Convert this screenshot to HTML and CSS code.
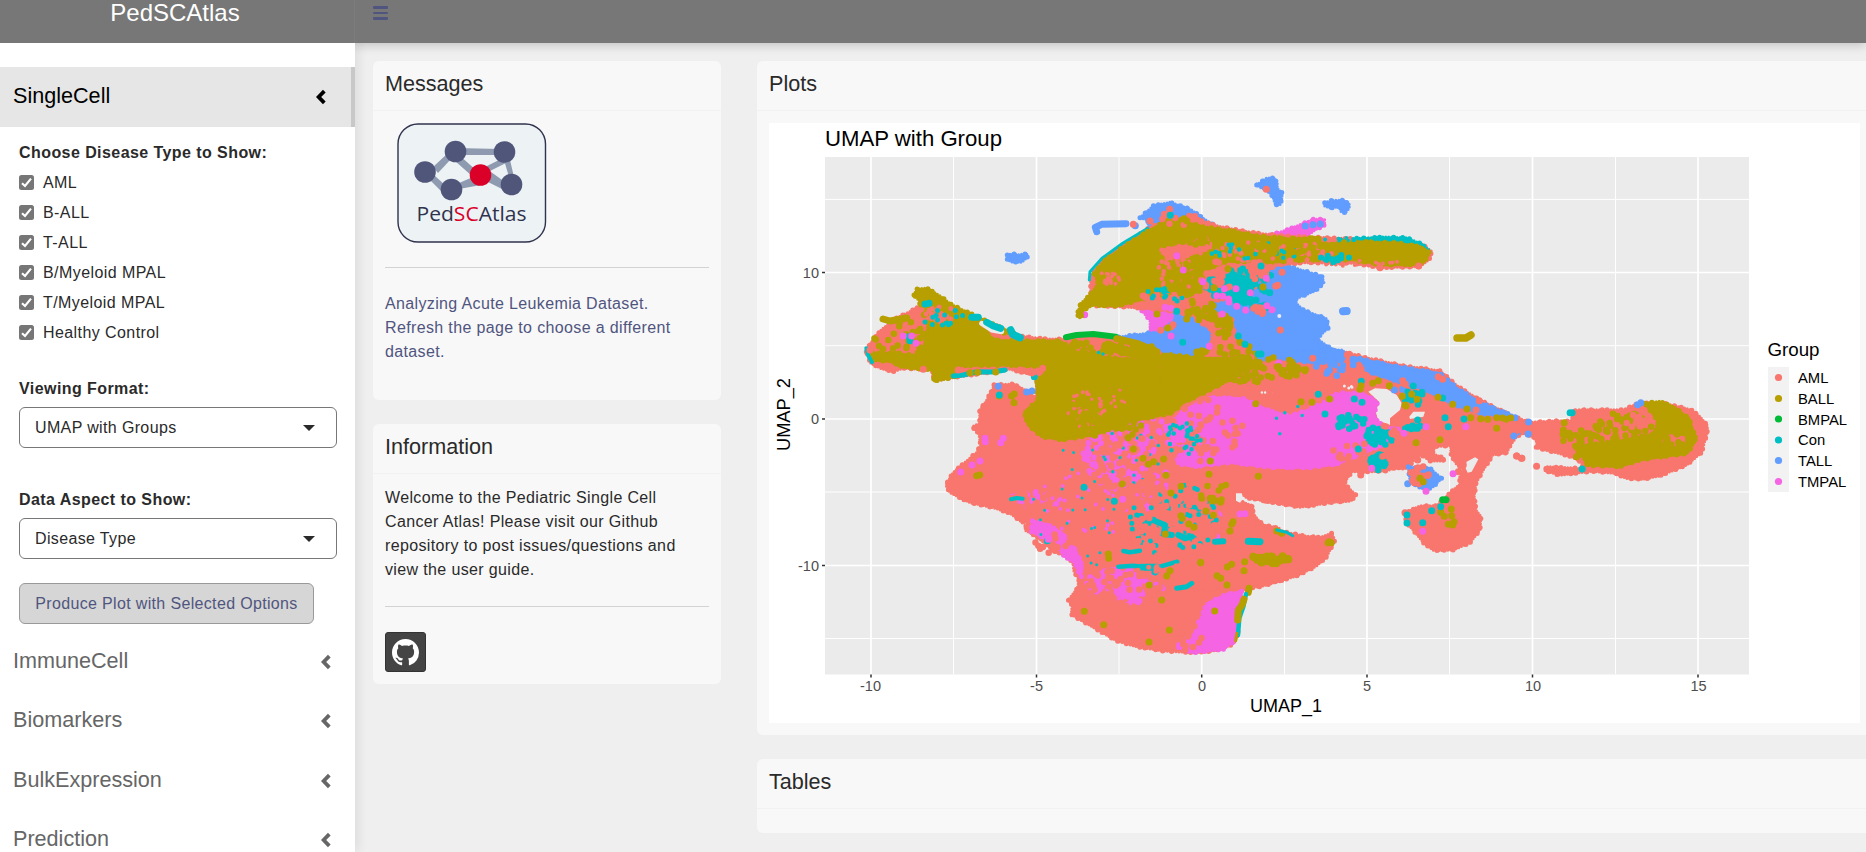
FILE: index.html
```html
<!DOCTYPE html>
<html lang="en">
<head>
<meta charset="utf-8">
<title>PedSCAtlas</title>
<link rel="stylesheet" href="styles.css">
</head>
<body>
<svg class="defs" width="0" height="0" aria-hidden="true">
  <symbol id="chevron" viewBox="0 0 10 16"><path d="M8.3 2.2 2.6 8l5.7 5.8" fill="none" stroke="currentColor" stroke-width="3.8"/></symbol>
  <symbol id="tick" viewBox="0 0 15 15"><path d="M3 8.2 6 11 12 3.6" fill="none" stroke="#fff" stroke-width="2.2"/></symbol>
</svg>
<header class="topbar">
  <div class="brand">PedSCAtlas</div>
  <button class="menu-toggle" aria-label="Toggle sidebar"><i></i><i></i><i></i></button>
</header>
<div class="shell">
  <aside class="sidebar">
    <a class="nav-row active"><span>SingleCell</span><svg class="chev"><use href="#chevron"/></svg></a>
    <div class="controls">
      <div class="label">Choose Disease Type to Show:</div>
      <div class="check"><svg class="box"><use href="#tick"/></svg><span>AML</span></div>
      <div class="check"><svg class="box"><use href="#tick"/></svg><span>B-ALL</span></div>
      <div class="check"><svg class="box"><use href="#tick"/></svg><span>T-ALL</span></div>
      <div class="check"><svg class="box"><use href="#tick"/></svg><span>B/Myeloid MPAL</span></div>
      <div class="check"><svg class="box"><use href="#tick"/></svg><span>T/Myeloid MPAL</span></div>
      <div class="check"><svg class="box"><use href="#tick"/></svg><span>Healthy Control</span></div>
      <div class="label label-format">Viewing Format:</div>
      <div class="select">UMAP with Groups<i class="caret"></i></div>
      <div class="label label-aspect">Data Aspect to Show:</div>
      <div class="select">Disease Type<i class="caret"></i></div>
      <button class="produce">Produce Plot with Selected Options</button>
    </div>
    <a class="nav-row"><span>ImmuneCell</span><svg class="chev"><use href="#chevron"/></svg></a>
    <a class="nav-row"><span>Biomarkers</span><svg class="chev"><use href="#chevron"/></svg></a>
    <a class="nav-row"><span>BulkExpression</span><svg class="chev"><use href="#chevron"/></svg></a>
    <a class="nav-row"><span>Prediction</span><svg class="chev"><use href="#chevron"/></svg></a>
  </aside>
  <main class="content">
    <div class="col-side">
      <section class="card messages">
        <h3>Messages</h3>
        <div class="card-body">
          <svg class="logo" viewBox="0 0 150 120">
            <rect x="1" y="1" width="147.500" height="118" rx="20" fill="#edf2f5" stroke="#30334d" stroke-width="1.4"/>
            <g fill="#8e9ab0">
              <path d="M58 25l46 1v6H58zM36 44l14-13 5 4-14 15zM37 52l12 11-5 5-10-10zM62 32l18 16-5 5-17-15zM88 44l16-8 5 4-20 10zM107 37h6l4 17h-5zM94 49l14 10-3 7-14-7zM62 60l14-6 8 8-22 4z"/>
            </g>
            <g fill="#50557a"><circle cx="28" cy="49" r="10.8"/><circle cx="58.5" cy="28.5" r="10.8"/><circle cx="107.5" cy="29" r="10.8"/><circle cx="54.500" cy="66.500" r="10.800"/><circle cx="114.500" cy="61.500" r="10.800"/></g>
            <circle cx="83.500" cy="52" r="10.800" fill="#da0028"/>
            <text x="19.5" y="98" textLength="110" lengthAdjust="spacingAndGlyphs" font-family="Open Sans" font-size="20" fill="#30334d">Ped<tspan fill="#da0028">SC</tspan>Atlas</text>
          </svg>
          <hr>
          <p class="notice">Analyzing Acute Leukemia Dataset. Refresh the page to choose a different dataset.</p>
        </div>
      </section>
      <section class="card info">
        <h3>Information</h3>
        <div class="card-body">
          <p>Welcome to the Pediatric Single Cell Cancer Atlas! Please visit our Github repository to post issues/questions and view the user guide.</p>
          <hr>
          <a class="github" aria-label="Github"><svg viewBox="0 0 16 16"><path fill="#fff" d="M8 0C3.58 0 0 3.58 0 8c0 3.54 2.29 6.53 5.47 7.59.4.07.55-.17.55-.38 0-.19-.01-.82-.01-1.49-2.010.37-2.530-.49-2.690-.94-.09-.23-.48-.94-.82-1.130-.28-.15-.68-.52-.01-.53.63-.01 1.080.58 1.230.82.72 1.210 1.870.87 2.330.66.07-.52.28-.87.51-1.070-1.780-.2-3.640-.89-3.640-3.950 0-.87.31-1.590.82-2.150-.08-.2-.36-1.020.08-2.120 0 0 .67-.21 2.200.82.64-.18 1.320-.27 2-.27s1.360.09 2 .27c1.530-1.040 2.200-.82 2.200-.82.44 1.100.16 1.920.08 2.120.51.56.82 1.270.82 2.150 0 3.070-1.870 3.750-3.650 3.950.29.25.54.73.54 1.480 0 1.070-.01 1.930-.01 2.200 0 .21.15.46.55.38A8.010 8.010 0 0 0 16 8c0-4.420-3.580-8-8-8z"/></svg></a>
        </div>
      </section>
    </div>
    <div class="col-main">
      <section class="card plots">
        <h3>Plots</h3>
        <div class="card-body">
          <svg class="plot" viewBox="769 123 1091 600">
            <rect x="769" y="123" width="1091" height="600" fill="#fff"/>
            <rect x="825" y="157" width="924" height="517.500" fill="#ebebeb"/>
            <g stroke="#fff">
              <path stroke-width="1" d="M825 199.400H1749M825 345.700H1749M825 492H1749M825 638.500H1749M953.500 157V674M1119 157V674M1284.500 157V674M1449.500 157V674M1615.500 157V674"/>
              <path stroke-width="1.700" d="M825 272.500H1749M825 419H1749M825 565.500H1749M871 157V674M1036.500 157V674M1201.700 157V674M1367 157V674M1532.500 157V674M1698 157V674"/>
            </g>
            <g id="cells"></g>
            <path stroke="#333" stroke-width="1.500" d="M822 272.500h3M822 419h3M822 565.500h3M871 674.500v3M1036.500 674.500v3M1201.700 674.500v3M1367 674.500v3M1532.500 674.500v3M1698 674.500v3"/>
            <g class="plot-text">
              <text x="825" y="145.500" font-size="21.500" textLength="177" lengthAdjust="spacingAndGlyphs">UMAP with Group</text>
              <g class="ticks" text-anchor="end"><text x="819" y="277.500">10</text><text x="819" y="424">0</text><text x="819" y="570.500">-10</text></g>
              <g class="ticks" text-anchor="middle"><text x="870.500" y="691">-10</text><text x="1036.500" y="691">-5</text><text x="1202" y="691">0</text><text x="1367" y="691">5</text><text x="1533" y="691">10</text><text x="1698.500" y="691">15</text></g>
              <text x="1250" y="712" font-size="19" textLength="72" lengthAdjust="spacingAndGlyphs">UMAP_1</text>
              <text transform="translate(790 451) rotate(-90)" font-size="18" textLength="73" lengthAdjust="spacingAndGlyphs">UMAP_2</text>
              <text x="1767.500" y="356" font-size="18.500" textLength="52" lengthAdjust="spacingAndGlyphs">Group</text>
              <rect x="1768" y="367" width="21" height="125" fill="#f2f2f2"/>
              <g class="keys"><text x="1798" y="383">AML</text><text x="1798" y="404">BALL</text><text x="1798" y="424.500">BMPAL</text><text x="1798" y="445">Con</text><text x="1798" y="466">TALL</text><text x="1798" y="487">TMPAL</text></g>
              <circle cx="1778.500" cy="377.500" r="3.600" fill="#f8766d"/><circle cx="1778.500" cy="398.500" r="3.600" fill="#b79f00"/><circle cx="1778.500" cy="419" r="3.600" fill="#00ba38"/><circle cx="1778.500" cy="440" r="3.600" fill="#00bfc4"/><circle cx="1778.500" cy="460.500" r="3.600" fill="#619cff"/><circle cx="1778.500" cy="481.500" r="3.600" fill="#f564e3"/>
            </g>
          </svg>
        </div>
      </section>
      <section class="card tables"><h3>Tables</h3></section>
    </div>
  </main>
</div>
<script src="plot.js"></script>
</body>
</html>
```
FILE: plot.js
```js
const COLORS = { aml: '#f8766d', ball: '#b79f00', bmpal: '#00ba38', con: '#00bfc4', tall: '#619cff', tmpal: '#f564e3', gap: '#ebebeb' };

// Sectors of the embedding: origin x, origin y, x scale, y scale.
const SECTORS = {
  W: [860, 180, 1 / 3, 1 / 3],
  N: [1070, 170, 1 / 3, 1 / 3],
  C: [1130, 350, 1 / 3, 1 / 3],
  S: [930, 370, 1 / 3, 1 / 3],
  E: [1240, 340, 1 / 2.505, 1 / 3],
  P: [0, 0, 1, 1]
};

const layer = document.getElementById('cells');
let seed = 20;
const rand = () => (seed = (seed * 16807) % 2147483647) / 2147483647;

function place(sector, x, y) {
  const [ox, oy, sx, sy] = SECTORS[sector];
  return (ox + x * sx).toFixed(1) + ' ' + (oy + y * sy).toFixed(1);
}
function pairs(text) {
  const n = text.trim().split(/\s+/).map(Number), out = [];
  for (let i = 0; i < n.length; i += 2) out.push([n[i], n[i + 1]]);
  return out;
}
function add(d, attrs) {
  const path = document.createElementNS('http://www.w3.org/2000/svg', 'path');
  path.setAttribute('d', d);
  for (const key in attrs) path.setAttribute(key, attrs[key]);
  layer.appendChild(path);
}
// Filled cluster with an uneven dotted rim.
function area(color, sector, text) {
  const d = 'M' + pairs(text).map(p => place(sector, p[0], p[1])).join('L') + 'Z';
  add(d, { fill: COLORS[color] });
  if (color === 'gap') return;
  add(d, { fill: 'none', stroke: COLORS[color], 'stroke-width': 3, 'stroke-linecap': 'round', 'stroke-dasharray': '0 2.9' });
  add(d, { fill: 'none', stroke: COLORS[color], 'stroke-width': 5, 'stroke-linecap': 'round', 'stroke-dasharray': '0 7 0 11 0 5 0 14 0 9' });
}
function stroke(color, sector, width, text) {
  add('M' + pairs(text).map(p => place(sector, p[0], p[1])).join('L'), { fill: 'none', stroke: COLORS[color], 'stroke-width': width, 'stroke-linecap': 'round', 'stroke-linejoin': 'round' });
}
function points(color, sector, text) {
  add(pairs(text).map(p => 'M' + place(sector, p[0], p[1]) + 'h0').join(''), { stroke: COLORS[color], 'stroke-width': 7, 'stroke-linecap': 'round' });
}
// Scatter of cells in an ellipse: centre, radii, count, dot size.
function scatter(color, sector, cx, cy, rx, ry, count, size = 6.5) {
  let d = '';
  for (let i = 0; i < count; i++) {
    const a = rand() * 2 * Math.PI, r = Math.sqrt(rand());
    d += 'M' + place(sector, cx + rx * r * Math.cos(a), cy + ry * r * Math.sin(a)) + 'h0';
  }
  add(d, { stroke: COLORS[color], 'stroke-width': size, 'stroke-linecap': 'round' });
}

// T-ALL
area('tall', 'N', '210 143 250 107 300 97 360 117 415 155 450 175 400 220 235 220 235 170 233 150');
area('tall', 'N', '240 430 300 420 420 400 500 300 590 287 655 288 755 318 762 338 735 363 668 390 700 420 768 445 776 473 740 505 775 530 830 560 850 600 740 600 640 600 570 590 540 570 200 590 140 502 230 490 260 480');
stroke('tall', 'N', 7, '80 185 76 172 95 163 168 161');
area('tall', 'N', '560 45 590 24 612 24 622 40 622 55 636 68 636 85 630 104 616 104 608 80 596 62 575 55');
area('tall', 'N', '764 98 785 91 820 91 838 103 838 115 826 128 812 124 808 110 780 114 764 108');
area('tall', 'W', '442 225 455 221 475 224 500 221 502 232 485 247 455 246 442 238');
stroke('tall', 'N', 8, '819 424 830 423');
stroke('ball', 'P', 7.5, '1457 338 1466 338 1471 335');
points('tall', 'N', '196 167');
points('aml', 'N', '190 163 589 58');

// T/Myeloid strands in the north
area('tmpal', 'N', '600 195 650 180 700 160 730 148 764 148 764 165 735 180 720 192');
points('tall', 'N', '706 168 729 164 751 162');
area('tmpal', 'N', '205 410 280 400 310 440 270 478 240 478 240 450');

// AML body
area('aml', 'S', '192 44 250 42 290 62 320 85 320 0 1050 0 1050 402 950 382 935 370 915 375 918 395 940 400 965 405 970 430 985 450 1000 465 1050 475 1050 632 960 650 935 662 930 700 923 800 903 825 850 843 790 848 700 843 620 830 560 813 500 778 440 743 424 733 426 705 415 690 442 655 447 630 430 600 432 580 400 553 370 543 320 500 284 480 292 455 275 456 240 430 190 413 120 398 60 368 47 345 70 307 105 277 140 247 152 225 146 190 126 170 149 160 149 120 167 95 187 60');
area('aml', 'C', '0 60 380 40 640 4 700 21 820 47 930 62 985 110 1050 150 1145 197 1200 217 1200 235 1160 260 1138 290 1132 308 1088 315 1060 360 1038 400 1033 440 1038 480 1053 500 1050 540 1020 578 970 600 912 602 880 578 860 553 832 520 822 492 870 467 920 467 957 432 992 400 987 385 1000 360 977 340 962 310 962 287 915 290 907 310 942 325 940 333 900 333 880 318 855 318 848 340 820 358 805 350 770 363 700 366 665 365 642 400 678 435 663 453 600 458 510 472 460 463 350 443 340 435 310 430 320 455 350 460 368 480 363 500 385 520 470 547 520 557 570 562 605 550 615 570 590 620 560 648 500 678 400 708 340 718 0 720');
area('gap', 'C', '735 115 770 117 800 135 815 160 810 180 780 205 780 225 745 212 737 185 747 155 715 125');
area('gap', 'C', '850 185 885 185 880 200 840 207 838 200');
area('gap', 'C', '1010 335 1035 322 1045 328 1025 365 1013 368 1005 350');
area('gap', 'C', '318 430 335 430 340 445 330 458 318 452');
scatter('gap', 'C', 650, 112, 20, 8, 4, 3);
scatter('gap', 'C', 460, 130, 90, 5, 7, 2.5);
points('aml', 'C', '692 375 1160 318 1176 325 1000 345 985 365 825 488');

// T-ALL tail
area('tall', 'C', '400 0 640 0 640 30 560 40 460 28');
area('tall', 'C', '690 25 720 32 820 52 930 70 980 113 1050 157 1150 197 1158 204 1050 190 960 160 930 142 850 105 780 88 715 65');
scatter('tall', 'C', 620, 40, 75, 38, 24);
points('tall', 'C', '1155 203 1150 252 1162 246 1198 224 1195 252 793 120 818 118');
points('aml', 'C', '818 92 826 103 925 80 938 88 1048 152 652 14 1038 180');
area('tall', 'C', '835 350 870 355 900 355 935 385 910 410 885 420 840 395');
points('tall', 'C', '833 401');
scatter('aml', 'C', 865, 375, 35, 30, 17);
points('aml', 'C', '863 330 806 350');

// T/Myeloid heart
area('tmpal', 'C', '120 225 150 190 200 160 240 142 340 145 420 182 480 197 540 177 600 137 640 128 700 130 743 155 733 190 743 217 800 240 770 280 700 310 620 343 540 353 430 353 300 338 190 350 140 340 150 290 110 250');
scatter('aml', 'C', 230, 230, 110, 90, 34);
scatter('aml', 'C', 180, 290, 90, 60, 18);
scatter('aml', 'C', 660, 305, 70, 25, 12);
scatter('aml', 'C', 500, 140, 100, 20, 34);
scatter('tmpal', 'S', 560, 250, 100, 110, 110, 6);
scatter('tmpal', 'S', 680, 200, 90, 55, 30, 6);
scatter('tmpal', 'S', 660, 340, 60, 70, 20, 5);
scatter('con', 'S', 600, 250, 100, 90, 16, 3.5);
scatter('aml', 'S', 590, 290, 110, 100, 68);
area('tmpal', 'S', '935 664 928 720 923 770 912 815 880 838 790 848 740 830 770 800 810 750 830 700 890 672');
area('tmpal', 'S', '307 452 350 462 400 490 410 512 438 540 458 590 453 625 435 580 402 558 375 520 303 485');
scatter('aml', 'S', 370, 520, 60, 30, 14);
area('tmpal', 'S', '470 640 520 605 570 590 680 600 670 625 630 640 620 690 560 675 540 620 510 665');
scatter('tmpal', 'S', 580, 650, 120, 55, 62, 5.5);
scatter('aml', 'S', 590, 655, 120, 65, 55);
scatter('tmpal', 'S', 320, 390, 85, 25, 34, 5.5);
scatter('aml', 'S', 320, 390, 85, 35, 32);
scatter('tmpal', 'S', 480, 400, 180, 100, 34, 3.8);
points('tmpal', 'S', '92 306 126 285 150 273 165 205 166 215 212 218 220 205 876 429 930 432 945 431 860 500');
scatter('aml', 'S', 770, 800, 45, 40, 22);

// Healthy control
scatter('con', 'S', 730, 450, 130, 110, 70, 5);
scatter('con', 'S', 520, 400, 230, 190, 28, 3);
scatter('aml', 'S', 730, 450, 170, 140, 110);
stroke('con', 'S', 4.5, '565 590 610 587 650 592 690 590 742 575');
stroke('con', 'S', 7, '635 592 680 592 675 606');
stroke('con', 'S', 6, '680 455 705 465 702 492 725 495');
stroke('con', 'S', 4.5, '580 543 600 547 630 542');
stroke('con', 'S', 6, '745 495 765 505 785 500');
stroke('con', 'S', 6, '855 515 880 514');
stroke('con', 'S', 7, '955 514 990 515');
stroke('con', 'S', 4, '243 388 260 384 278 386');
stroke('con', 'S', 5, '740 655 770 650 785 640');
scatter('aml', 'S', 680, 600, 90, 30, 14, 5);
scatter('con', 'C', 160, 265, 55, 50, 30, 4.5);
scatter('con', 'C', 660, 215, 50, 22, 24);
scatter('con', 'C', 748, 258, 42, 30, 42);
scatter('con', 'C', 745, 335, 25, 25, 24);
scatter('con', 'C', 855, 140, 35, 30, 12);
scatter('con', 'C', 850, 232, 26, 10, 9);
scatter('con', 'C', 500, 215, 130, 60, 5, 3.5);
points('con', 'C', '673 147 696 157 565 133 694 94 850 108 876 132 938 144 863 210 945 203 1002 207 955 230 685 297 585 192');
points('tmpal', 'C', '803 240 888 230 1007 230 969 371 888 424 725 355 446 42 822 250');
scatter('aml', 'C', 760, 285, 60, 70, 14);

// B-ALL centre
area('ball', 'P', '1045 352 1070 345 1120 341 1157 353 1193 357 1203 351 1225 350 1255 352 1250 362 1236 377 1210 390 1183 403 1172 413 1130 422 1097 434 1063 440 1042 437 1028 425 1024 412 1038 400 1036 383 1045 372');
scatter('aml', 'S', 470, 125, 60, 60, 40, 4);
scatter('ball', 'S', 460, 140, 70, 50, 28);
scatter('aml', 'S', 540, 60, 70, 55, 32, 3.5);
scatter('ball', 'S', 545, 165, 95, 40, 26);
scatter('ball', 'C', 400, 55, 120, 35, 36);
scatter('ball', 'C', 330, 45, 60, 50, 34);
scatter('ball', 'S', 860, 370, 65, 30, 13);
points('ball', 'S', '208 78 245 78 253 72 252 98 140 317 149 315 594 203 610 237 639 265 655 283 671 275 701 267 708 316 577 342 723 369 753 349 841 273 837 313 985 319 841 385 753 437 757 445 776 462 792 472 706 492 828 423 850 436 905 462 909 455 900 483 535 552 536 565 812 578 720 602 710 618 658 645 695 690 463 724 521 764 718 780 657 816 854 723 861 617 872 625 891 645 892 591 905 583 944 575 942 602');
stroke('ball', 'C', 8, '370 620 400 632 440 630 475 628');
scatter('ball', 'C', 420, 628, 58, 16, 30);
points('ball', 'C', '598 575 594 578 604 578 440 543 455 550 212 637');
stroke('ball', 'S', 7, '957 655 955 667');
stroke('con', 'S', 4.5, '948 672 940 710 928 745 924 795');
stroke('ball', 'S', 7, '942 688 936 705 925 720 923 750');
stroke('ball', 'S', 3, '921 790 917 812');
points('con', 'S', '208 75 313 20 352 512 462 352 553 394');
points('tmpal', 'S', '355 508 578 388');
points('tall', 'S', '205 49 290 66 306 63');
points('ball', 'C', '377 161 513 155 546 157 599 147 693 107 690 118 728 100 745 92 778 107 817 139 845 133 861 148 825 165 828 168 924 142 968 163 1011 177 1022 203 1052 206 1073 208 1100 203 1118 204 1130 208 1142 204 858 278 930 269 1100 235 870 385 880 395 932 487 943 499 964 477 965 497 955 523 968 525 972 515');
points('con', 'C', '932 470 905 482 831 495 831 519 878 518');
points('tmpal', 'C', '878 544');
points('bmpal', 'C', '938 449 948 449');
stroke('con', 'C', 3, '440 540 470 547 488 557');

// Western arm
area('aml', 'W', '19 515 31 490 64 449 110 414 175 382 190 362 260 382 400 432 470 467 560 477 615 477 700 468 850 500 900 515 900 560 540 580 510 583 450 568 300 590 222 600 217 570 130 565 100 575 64 566 32 550');
stroke('bmpal', 'W', 6, '618 472 650 465 700 462 767 470');
area('ball', 'W', '36 518 100 520 170 525 195 490 205 430 235 400 300 412 380 452 400 480 500 482 600 482 650 515 720 530 900 545 900 620 540 620 560 560 430 556 280 558 284 590 245 600 222 603 217 570 130 562 90 545 38 540');
area('ball', 'W', '162 345 170 327 200 324 240 347 275 374 400 432 467 462 430 460 360 432 300 407 240 385 178 378 180 365');
stroke('ball', 'W', 7, '69 417 90 423 120 418 140 414');
scatter('ball', 'W', 150, 475, 110, 55, 40);
scatter('ball', 'W', 250, 405, 60, 26, 28);
scatter('aml', 'W', 240, 405, 55, 26, 22, 5);
scatter('ball', 'W', 680, 505, 70, 22, 22);
scatter('ball', 'W', 810, 510, 85, 18, 36);
stroke('ball', 'W', 7, '770 476 830 490 890 515');
scatter('con', 'W', 250, 412, 65, 28, 14, 5);
stroke('gap', 'W', 5, '365 430 395 450 425 455');
stroke('con', 'W', 7, '335 412 355 412');
stroke('con', 'W', 7, '380 427 400 438 422 445');
stroke('con', 'W', 7.5, '452 450 458 463 480 473');
points('con', 'W', '195 372 207 370 147 470 150 482');
stroke('con', 'W', 4, '19 505 24 525 36 547');
points('aml', 'W', '30 510');
points('tmpal', 'W', '130 468 155 468 168 490 674 404');
stroke('con', 'W', 5, '280 588 310 585 350 575 400 576 435 570');
points('ball', 'W', '330 578 353 577 407 576 228 598 245 590');
points('aml', 'W', '80 562 95 566 190 568 295 570 480 570 505 575 548 565');
scatter('con', 'W', 760, 505, 60, 20, 7, 3.5);

// Northern arm
area('aml', 'N', '62 370 62 320 99 268 160 224 232 177 290 147 375 145 440 167 500 179 560 189 640 197 740 202 850 206 980 207 1055 222 1085 244 1078 268 1050 290 930 293 850 280 700 278 620 286 560 320 540 370 400 400 390 440 280 420 220 415 150 410 80 408');
stroke('con', 'N', 3, '58 330 60 305 96 265 158 220 233 175');
area('con', 'N', '860 205 945 201 1010 203 1050 220 1078 240 1000 260 860 260');
area('ball', 'N', '24 425 32 400 60 375 85 340 72 310 102 272 165 227 235 182 290 152 345 144 400 170 500 184 560 197 700 210 760 222 860 214 980 218 1055 230 1080 248 1063 275 1045 284 930 285 850 270 740 270 620 276 490 275 410 300 390 330 375 365 280 376 220 388 140 408 70 406 40 420 32 445 24 440');
area('aml', 'N', '275 240 340 225 410 205 425 232 375 250 340 262 290 265');
scatter('ball', 'N', 370, 215, 50, 15, 12);
scatter('aml', 'N', 320, 310, 60, 60, 34, 4.6);
scatter('aml', 'N', 115, 325, 36, 20, 20, 4);
scatter('aml', 'N', 540, 245, 170, 28, 34, 4.6);
scatter('con', 'N', 560, 243, 150, 24, 22, 4.6);
scatter('aml', 'N', 740, 245, 60, 28, 22, 5);
scatter('aml', 'N', 860, 280, 160, 8, 16, 4);
scatter('con', 'N', 790, 265, 50, 12, 14, 6);
scatter('con', 'N', 800, 208, 60, 5, 10, 4);
scatter('ball', 'N', 680, 225, 150, 25, 32);
scatter('aml', 'N', 330, 150, 70, 16, 8);
points('aml', 'N', '240 153 299 118 283 133 1046 288 930 293 372 145');
points('con', 'N', '301 136');
points('ball', 'N', '342 146 350 152');
scatter('aml', 'N', 300, 385, 90, 22, 34);
scatter('con', 'N', 290, 375, 75, 20, 14, 5);
scatter('ball', 'N', 350, 340, 55, 65, 40);

// Mixed centre and diagonal strand
scatter('aml', 'N', 500, 325, 90, 40, 38);
area('con', 'N', '430 330 480 310 530 320 555 345 530 380 545 400 520 405 480 375 430 375');
scatter('con', 'N', 500, 345, 95, 50, 50);
scatter('con', 'N', 570, 415, 25, 12, 9);
scatter('con', 'N', 592, 322, 14, 14, 8);
scatter('aml', 'N', 440, 320, 55, 45, 20);
scatter('aml', 'N', 565, 300, 25, 35, 18);
scatter('aml', 'N', 565, 418, 40, 14, 9);
area('aml', 'N', '345 400 400 400 430 430 485 445 495 500 540 550 550 562 410 562 425 540 425 480 380 450');
scatter('ball', 'N', 395, 425, 50, 30, 28);
scatter('ball', 'N', 465, 470, 28, 35, 22);
scatter('ball', 'N', 490, 540, 50, 40, 14);
stroke('ball', 'P', 9, '1108 345 1120 350 1145 356 1175 362 1230 361 1248 359');
points('tmpal', 'N', '589 325 463 356 498 356 541 368 440 377 458 378 476 387 477 396 500 409 527 421 590 407 606 419 457 432 418 529 285 412 303 415 303 498 626 580 320 257 340 300 398 335');
points('aml', 'N', '636 307 623 346 617 348 631 480 728 565 660 273 309 464 304 470 272 481');
points('con', 'N', '599 368 558 390 338 517 565 552 573 552 320 424 573 288 505 498 525 523');
points('ball', 'N', '579 351 474 296 432 353 261 432 293 474 350 447 554 608 555 632 562 635 380 546 395 542 404 545 450 547');
add('M' + place('N', 628, 438) + 'h0', { stroke: COLORS.gap, 'stroke-width': 4, 'stroke-linecap': 'round' });
scatter('ball', 'N', 660, 605, 55, 22, 18);

// Eastern island
area('aml', 'E', '660 255 680 250 800 242 832 244 829 215 850 209 960 209 1000 189 1060 189 1130 209 1150 227 1171 257 1170 280 1156 338 1118 376 1050 408 1010 418 970 416 940 400 880 394 800 406 762 391 770 380 850 385 862 372 830 350 742 323 744 308 735 290 700 275 650 290');
area('ball', 'E', '1014 190 1050 184 1088 200 1110 222 1125 235 1143 300 1120 341 1060 350 1000 361 950 381 870 376 852 340 835 320 900 310 960 300 1040 280 1045 240');
scatter('ball', 'E', 870, 300, 85, 30, 34);
scatter('ball', 'E', 960, 260, 70, 42, 38);
scatter('aml', 'E', 1090, 300, 32, 22, 10);
scatter('aml', 'E', 985, 250, 28, 26, 12);
scatter('ball', 'E', 1090, 310, 40, 20, 14);
points('con', 'E', '827 218 832 218 857 387');
points('tall', 'E', '996 194 1004 188 723 246 722 282 686 288');
points('ball', 'E', '812 248 810 270 825 280 843 350');
points('aml', 'E', '693 348 705 355 743 379 770 388');
```
FILE: styles.css
```css
* { box-sizing: border-box; }
html, body { margin: 0; height: 100%; overflow: hidden; }
body { background: #efefef; color: #2a2a2a; font: 16px/24px "Liberation Sans", Arial, sans-serif; }
.defs { position: absolute; }
button { font: inherit; }

.topbar { position: relative; z-index: 2; display: flex; height: 43px; background: #777; box-shadow: 0 2px 10px rgba(0, 0, 0, .2); }
.brand { width: 355px; height: 43px; padding: 1px 4px 0 0; border-right: 1px solid #7d7d7d; color: #fff; font-size: 24px; line-height: 24px; text-align: center; }
.menu-toggle { display: flex; flex-direction: column; gap: 3px; width: 15px; margin: 6px 0 0 18px; padding: 0; border: 0; background: none; }
.menu-toggle i { height: 2.500px; background: #50557f; border-radius: 1px; }

.shell { display: flex; height: 809px; }
.sidebar { flex: none; position: relative; z-index: 3; width: 355px; padding-top: 24px; background: #fff; box-shadow: 4px 0 10px rgba(0, 0, 0, .07); clip-path: inset(0 -20px 0 0); }
.nav-row { display: flex; align-items: center; justify-content: space-between; height: 59.500px; padding: 0 24px 2px 13px; color: #666; font-size: 21.600px; }
.nav-row.active { height: 60px; background: #e6e6e6; border-right: 4px solid #c8c8c8; color: #000; padding-right: 25px; }
.chev { width: 10px; height: 16px; margin-top: 2px; }
.controls { height: 505px; padding: 14px 18px 0 19px; letter-spacing: .36px; }
.label { font-weight: 700; letter-spacing: .43px; }
.label-format { margin-top: 29px; }
.label-aspect { margin-top: 40px; }
.check { display: flex; align-items: center; gap: 9px; height: 30px; padding-bottom: 1px; letter-spacing: .42px; }
.label + .check { margin-top: 3px; }
.box { width: 15px; height: 15px; border-radius: 2.500px; background: #767676; }
.select { display: flex; align-items: center; justify-content: space-between; height: 41px; margin-top: 6px; padding: 0 21px 0 15px; border: 1px solid #777; border-radius: 6px; }
.caret { border: 6px solid transparent; border-top-color: #2a2a2a; border-bottom: 0; }
.produce { height: 41px; width: 295px; margin-top: 24px; padding: 0; border: 1px solid #999; border-radius: 6px; background: #d6d6d6; color: #50557f; letter-spacing: .34px; white-space: nowrap; }

.content { display: flex; flex: none; gap: 36px; padding: 18px 0 0 18px; }
.col-side { width: 348px; }
.col-main { width: 1115px; }
.card { margin-bottom: 24px; border-radius: 6px; background: #f8f8f8; }
.card h3 { margin: 0; height: 50px; padding: 10px 12px 0; border-bottom: 1px solid #f2f2f2; font-size: 21.600px; line-height: 26px; font-weight: 400; }
.card-body { padding: 12px; }
.card p { max-width: 308px; margin: 0; letter-spacing: .36px; }
.card hr { height: 1px; margin: 0; border: 0; background: #d3d3d3; }
.messages { height: 339px; }
.logo { display: block; width: 150px; height: 120px; margin: 0 0 24px 12px; }
.messages hr { margin-bottom: 24px; }
.notice { color: #50557f; }
.info { height: 260px; }
.info hr { margin: 24px 0 25px; }
.github { display: flex; align-items: center; justify-content: center; width: 41px; height: 40px; border-radius: 3px; background: #444; border: 1px solid #333; }
.github svg { width: 27px; height: 27px; }
.plots { height: 674px; }
.plot { display: block; width: 1091px; height: 600px; }
.plot-text { font-family: "Liberation Sans", Arial, sans-serif; }
.ticks { font-size: 14.500px; fill: #4d4d4d; }
.keys { font-size: 14.800px; }
.tables { height: 74px; }
```
